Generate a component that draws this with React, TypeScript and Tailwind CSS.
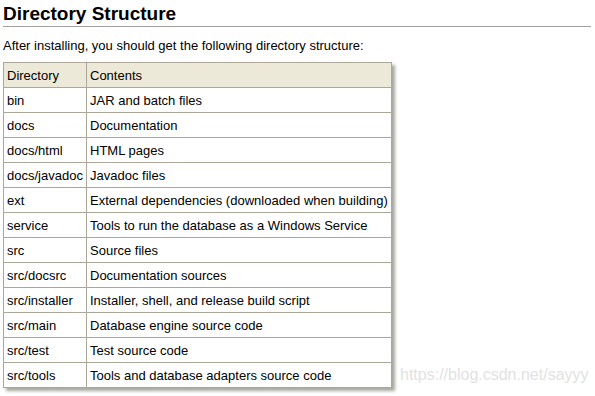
import React from "react";

const rows: [string, string][] = [
  ["bin", "JAR and batch files"],
  ["docs", "Documentation"],
  ["docs/html", "HTML pages"],
  ["docs/javadoc", "Javadoc files"],
  ["ext", "External dependencies (downloaded when building)"],
  ["service", "Tools to run the database as a Windows Service"],
  ["src", "Source files"],
  ["src/docsrc", "Documentation sources"],
  ["src/installer", "Installer, shell, and release build script"],
  ["src/main", "Database engine source code"],
  ["src/test", "Test source code"],
  ["src/tools", "Tools and database adapters source code"],
];

export default function App() {
  return (
    <div className="relative w-[595px] h-[396px] bg-white text-black overflow-hidden" style={{ fontFamily: '"Liberation Sans", Arial, sans-serif' }}>
      <div className="pl-[3px] pr-[4px]">
        <h1 className="text-[19px] font-bold leading-[22px] pt-[3px] pb-[1px] border-b border-[#a0a0a0]">Directory Structure</h1>
        <p className="text-[13px] leading-[15px] mt-[11px]">After installing, you should get the following directory structure:</p>
        <table className="mt-[9px] border-collapse text-[13px] leading-[15px] shadow-[3px_3px_3px_#a8a8a0]">
          <thead>
            <tr className="bg-[#ece9d8] h-[25px]">
              <th className="border border-[#aca899] font-normal text-left px-[3px] w-[83px]">Directory</th>
              <th className="border border-[#aca899] font-normal text-left px-[3px] w-[305px]">Contents</th>
            </tr>
          </thead>
          <tbody>
            {rows.map(([d, c]) => (
              <tr key={d} className="h-[25px]">
                <td className="border border-[#aca899] px-[3px] whitespace-nowrap">{d}</td>
                <td className="border border-[#aca899] px-[3px] whitespace-nowrap">{c}</td>
              </tr>
            ))}
          </tbody>
        </table>
      </div>
      <div className="absolute left-[400px] top-[366px] text-[16px] leading-[18px] text-[#e2e2e2]">https://blog.csdn.net/sayyy</div>
    </div>
  );
}
